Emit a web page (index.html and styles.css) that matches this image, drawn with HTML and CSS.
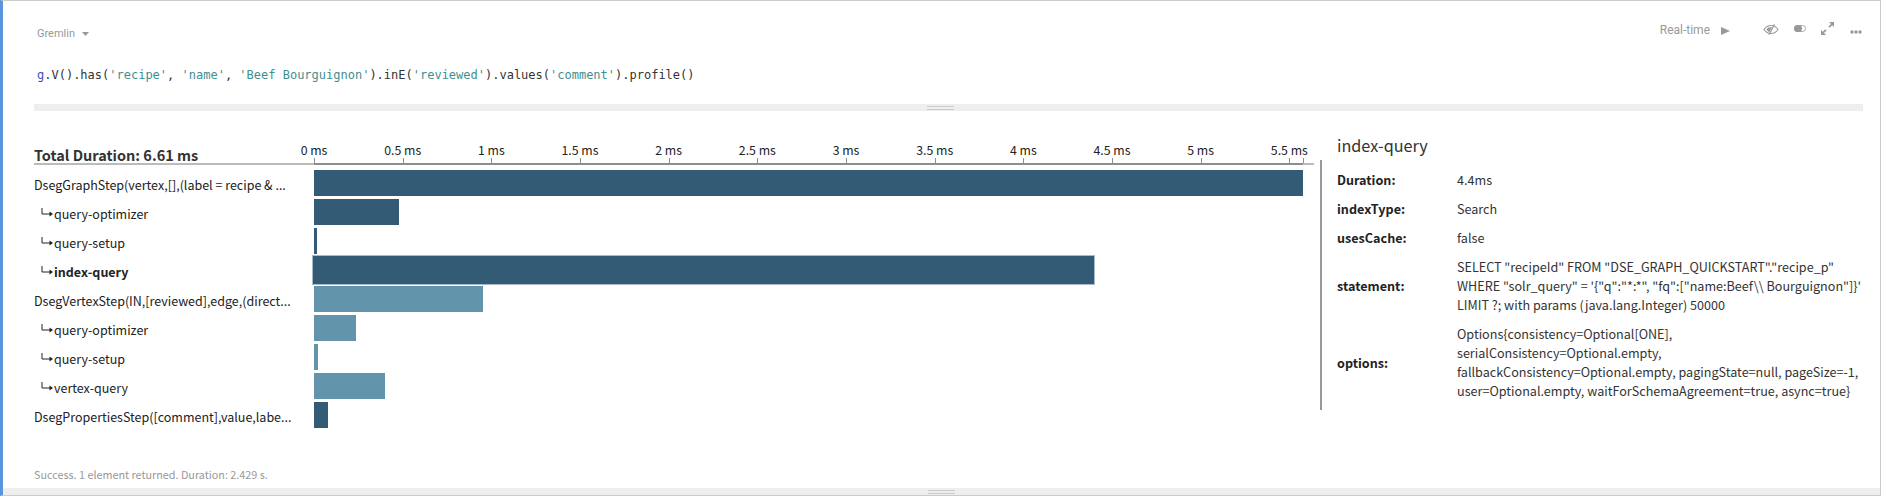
FILE: index.html
```html
<!DOCTYPE html>
<html lang="en">
<head>
<meta charset="utf-8">
<title>Gremlin profile</title>
<link rel="stylesheet" href="styles.css">
</head>
<body>
<main class="cell">
  <section class="editor">
    <header class="toolbar">
      <div class="lang">Gremlin <svg class="caret" width="7" height="4" viewBox="0 0 7 4"><path d="M0 0h7L3.500 4z"/></svg></div>
      <div class="tools">
        <span class="rt">Real-time</span>
        <svg class="play" width="9" height="8" viewBox="0 0 9 8"><path d="M0 0l9 4-9 4z"/></svg>
        <svg class="eye" width="16" height="11" viewBox="0 0 16 11"><path d="M1 5.500C3 2.500 5 1.500 8 1.500s5 1 7 4c-2 3-4 4-7 4s-5-1-7-4z" fill="none" stroke="#999" stroke-width="1.200"/><path d="M3.500 5.500C4.500 3.700 6 3 9 3L6.500 8C5 7.600 4.500 7 3.500 5.500z"/><path d="M11.500.3L6 10.700" stroke="#999" stroke-width="1.200" fill="none"/></svg>
        <svg class="toggle" width="12" height="7" viewBox="0 0 12 7"><rect x=".5" y=".5" width="11" height="6" rx="3" fill="none" stroke="#aaa"/><rect width="8" height="7" rx="3.500"/></svg>
        <svg class="expand" width="13" height="13" viewBox="0 0 13 13"><path d="M8 0h5v5l-1.800-1.800-2.600 2.600-1.200-1.200 2.600-2.600zM5 13H0V8l1.800 1.800 2.600-2.600 1.200 1.200-2.600 2.600z"/></svg>
        <svg class="dots" width="12" height="4" viewBox="0 0 12 4"><circle cx="2" cy="2" r="1.700"/><circle cx="6" cy="2" r="1.700"/><circle cx="10" cy="2" r="1.700"/></svg>
      </div>
    </header>
    <pre class="code"><span class="var">g</span>.V().has(<span class="str">'recipe'</span>, <span class="str">'name'</span>, <span class="str">'Beef Bourguignon'</span>).inE(<span class="str">'reviewed'</span>).values(<span class="str">'comment'</span>).profile()</pre>
    <div class="splitter"><span class="grip"></span></div>
  </section>

  <section class="profile">
    <div class="chart">
      <div class="chart-head">
        <div class="total">Total Duration: 6.61 ms</div>
        <div class="axis">
          <span class="tick" style="left:0"><b>0 ms</b></span>
          <span class="tick" style="left:88.67px"><b>0.5 ms</b></span>
          <span class="tick" style="left:177.33px"><b>1 ms</b></span>
          <span class="tick" style="left:266px"><b>1.5 ms</b></span>
          <span class="tick" style="left:354.67px"><b>2 ms</b></span>
          <span class="tick" style="left:443.33px"><b>2.5 ms</b></span>
          <span class="tick" style="left:532px"><b>3 ms</b></span>
          <span class="tick" style="left:620.67px"><b>3.5 ms</b></span>
          <span class="tick" style="left:709.33px"><b>4 ms</b></span>
          <span class="tick" style="left:798px"><b>4.5 ms</b></span>
          <span class="tick" style="left:886.67px"><b>5 ms</b></span>
          <span class="tick" style="left:975.33px"><b>5.5 ms</b></span>
          <span class="tick" style="left:989px"></span>
        </div>
      </div>
      <div class="rows">
        <div class="row"><div class="label">DsegGraphStep(vertex,[],(label = recipe &amp; ...</div><div class="track"><div class="bar dark" style="width:989px"></div></div></div>
        <div class="row"><div class="label sub"><svg class="hook" width="12" height="9" viewBox="0 0 12 9"><use href="#hook"/></svg>query-optimizer</div><div class="track"><div class="bar dark" style="width:84.5px"></div></div></div>
        <div class="row"><div class="label sub"><svg class="hook" width="12" height="9" viewBox="0 0 12 9"><use href="#hook"/></svg>query-setup</div><div class="track"><div class="bar dark" style="width:3px"></div></div></div>
        <div class="row active"><div class="label sub"><svg class="hook" width="12" height="9" viewBox="0 0 12 9"><use href="#hook"/></svg>index-query</div><div class="track"><div class="bar dark" style="width:781px"></div></div></div>
        <div class="row"><div class="label">DsegVertexStep(IN,[reviewed],edge,(direct...</div><div class="track"><div class="bar light" style="width:168.5px"></div></div></div>
        <div class="row"><div class="label sub"><svg class="hook" width="12" height="9" viewBox="0 0 12 9"><use href="#hook"/></svg>query-optimizer</div><div class="track"><div class="bar light" style="width:42px"></div></div></div>
        <div class="row"><div class="label sub"><svg class="hook" width="12" height="9" viewBox="0 0 12 9"><use href="#hook"/></svg>query-setup</div><div class="track"><div class="bar light" style="width:4px"></div></div></div>
        <div class="row"><div class="label sub"><svg class="hook" width="12" height="9" viewBox="0 0 12 9"><use href="#hook"/></svg>vertex-query</div><div class="track"><div class="bar light" style="width:71px"></div></div></div>
        <div class="row"><div class="label">DsegPropertiesStep([comment],value,labe...</div><div class="track"><div class="bar dark" style="width:13.5px"></div></div></div>
      </div>
    </div>
    <aside class="detail">
      <h2 class="detail-title">index-query</h2>
      <dl class="props">
        <dt>Duration:</dt><dd>4.4ms</dd>
        <dt>indexType:</dt><dd>Search</dd>
        <dt>usesCache:</dt><dd>false</dd>
        <dt>statement:</dt><dd>SELECT "recipeId" FROM "DSE_GRAPH_QUICKSTART"."recipe_p"<br>WHERE "solr_query" = '{"q":"*:*", "fq":["name:Beef\\ Bourguignon"]}'<br>LIMIT ?; with params (java.lang.Integer) 50000</dd>
        <dt>options:</dt><dd>Options{consistency=Optional[ONE],<br>serialConsistency=Optional.empty,<br>fallbackConsistency=Optional.empty, pagingState=null, pageSize=-1,<br>user=Optional.empty, waitForSchemaAgreement=true, async=true}</dd>
      </dl>
    </aside>
  </section>

  <footer class="status">Success. 1 element returned. Duration: 2.429 s.</footer>
  <div class="splitter"><span class="grip"></span></div>
</main>
<svg class="defs" width="0" height="0"><defs><symbol id="hook" viewBox="0 0 12 9"><path d="M1 0v6h8" fill="none" stroke="#222" stroke-width="1"/><path d="M8.500 3.500L12 6 8.500 8.500z" fill="#222"/></symbol></defs></svg>
</body>
</html>
```
FILE: styles.css
```css
* { box-sizing: border-box; }
html, body { margin: 0; padding: 0; background: #fff; }
body { width: 1882px; height: 496px; overflow: hidden; font-family: "Noto Sans CJK SC", "Noto Sans", sans-serif; color: #222; }
.defs { position: absolute; }

.cell { width: 1881px; height: 496px; border: solid #ccc; border-width: 1px 1px 1px 0; border-left: 3px solid #5a94db; display: flex; flex-direction: column; }

.editor { padding: 0 17px 0 31px; flex: none; }
.toolbar { display: flex; justify-content: space-between; height: 34px; margin-top: 15px; }
.lang { font-family: Roboto, sans-serif; font-size: 11px; color: #999; padding-left: 3px; display: flex; align-items: center; gap: 7px; }
.caret { margin-top: 2px; }
.caret path { fill: #999; }
.tools { display: flex; align-items: center; height: 28px; }
.tools svg { fill: #999; display: block; }
.rt { font-family: Roboto, sans-serif; font-size: 12px; color: #999; margin-right: 11px; }
.play { margin-right: 33px; margin-top: 1px; }
.eye { margin-right: 15px; margin-bottom: 2px; }
.toggle { margin-right: 15px; margin-bottom: 3px; }
.expand { margin-right: 16px; margin-bottom: 3px; }
.dots { margin-right: 1px; margin-top: 4px; }

.code { margin: 17px 0 0; padding-left: 3px; height: 37px; font-family: "DejaVu Sans Mono", monospace; font-size: 12px; line-height: 16px; color: #333; }
.var { color: #3f51b5; }
.str { color: #3f8f8f; }

.splitter { flex: none; height: 7px; background: #eee; display: flex; align-items: center; justify-content: center; }
.grip { width: 27px; height: 4px; border-top: 1px solid #ccc; border-bottom: 1px solid #ccc; }
.editor .grip { margin-right: 16px; }

.profile { display: flex; flex: 1; min-height: 0; padding-left: 31px; }
.chart { width: 1286px; }
.chart-head { display: flex; height: 54px; }
.total { width: 280px; padding-top: 35px; font-size: 14.5px; font-weight: 700; line-height: 18px; color: #333; border-bottom: 2px solid #bbb; white-space: nowrap; }
.axis { position: relative; width: 1000px; border-bottom: 2px solid #bbb; }
.axis::before { content: ""; position: absolute; left: 0; bottom: -2px; width: 989px; height: 2px; background: #8e8e8e; }
.tick { position: absolute; bottom: 0; width: 1px; height: 5px; background: #8e8e8e; }
.tick b { position: absolute; bottom: 5px; left: 0; transform: translateX(-50%); white-space: nowrap; font-weight: 400; font-size: 12.3px; line-height: 16px; color: #222; }

.rows { margin-top: 5px; display: flex; flex-direction: column; gap: 3px; }
.row { display: flex; height: 26px; }
.label { width: 280px; height: 25px; font-size: 12.5px; line-height: 20px; white-space: nowrap; padding-top: 5px; display: flex; align-items: center; }
.label.sub { padding-left: 7px; }
.hook { margin-right: 1px; margin-top: -3px; }
.track { flex: 1; height: 26px; }
.bar { height: 26px; }
.dark { background: #345b75; }
.light { background: #6295ac; }
.active .label { font-weight: 700; }
.active .bar { margin: -2px 0 0 -2px; box-sizing: content-box; height: 28px; border: 1px solid #a9bac6; }

.detail { border-left: 2px solid #999; height: 250px; margin-top: 49px; padding-left: 15px; }
.detail-title { margin: -27px 0 0; font-size: 16.2px; font-weight: 400; line-height: 24px; color: #333; }
.props { display: grid; grid-template-columns: 120px 1fr; row-gap: 10px; margin: 13px 0 0; font-size: 12.6px; line-height: 19px; align-items: center; }
.props dt { font-weight: 700; color: #222; }
.props dd { margin: 0; color: #333; white-space: nowrap; }

.status { flex: none; height: 22px; padding-left: 31px; font-size: 10.8px; line-height: 16px; color: #999; }
```
